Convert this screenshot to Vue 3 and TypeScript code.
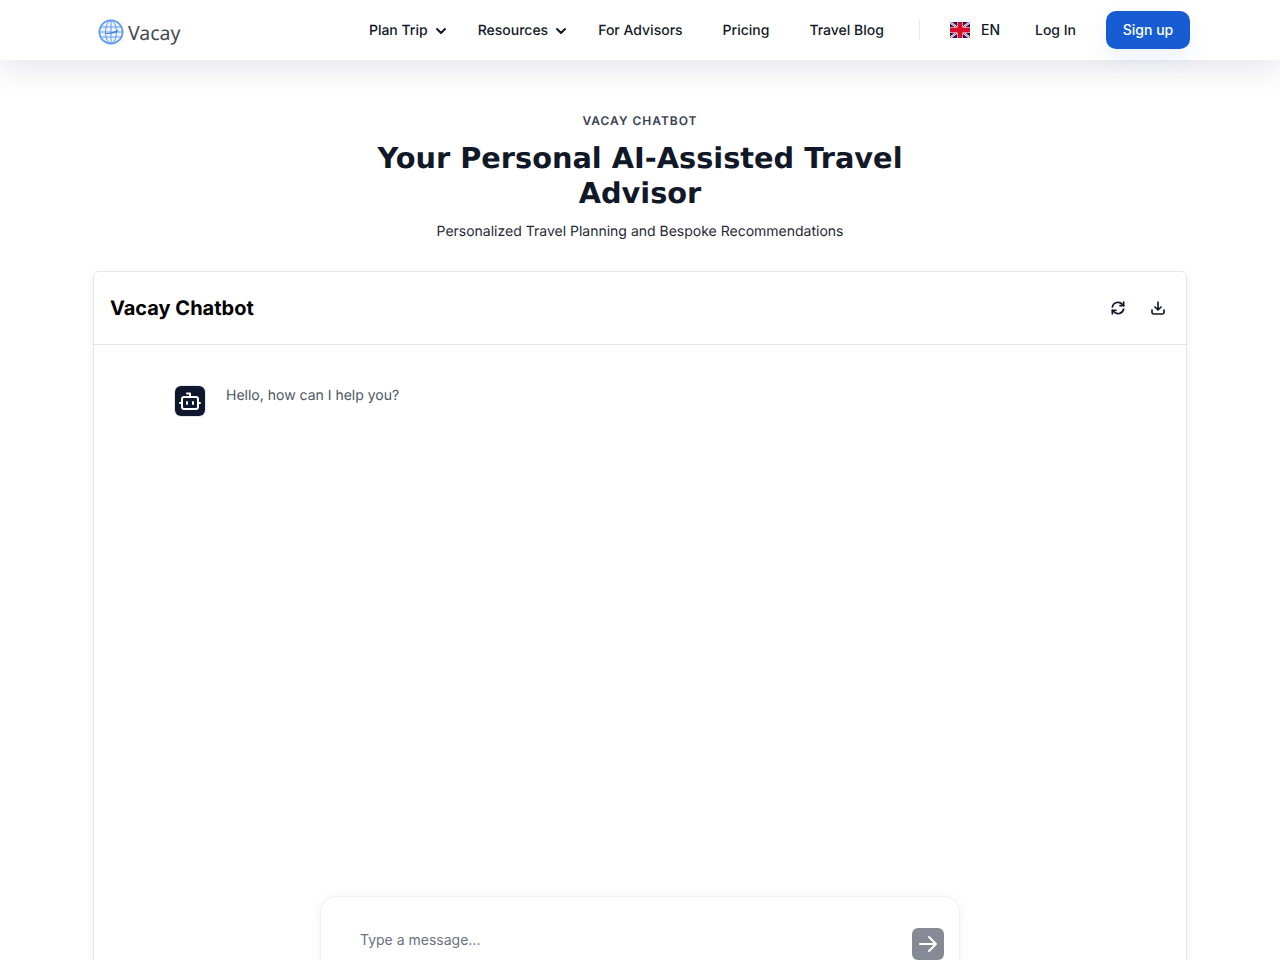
<template>
  <div class="page">
    <header class="topbar">
      <div class="topbar-inner">
        <a class="logo">
          <svg class="globe" viewBox="0 0 26 26" fill="none" stroke="#5f9bef">
            <circle cx="13" cy="13" r="11.6" stroke-width="1.8" fill="#eef5fe" />
            <ellipse cx="13" cy="13" rx="5.5" ry="11.4" stroke-width="1" />
            <path d="M13 1.5v23M2.6 8h20.8M1.5 13h23M2.6 18h20.8" stroke-width="1" />
            <path d="M5 14.5c4-.4 9-.9 12.5-2.6l3-1.2-.6 1.8c-3 2-9 3-14.900 2z" fill="#3f7fe0" stroke="none" />
          </svg>
          <span class="logo-text">Vacay</span>
        </a>
        <nav class="nav">
          <a v-for="item in navItems" :key="item.label" class="nav-link" :class="{ 'has-menu': item.menu }">
            {{ item.label }}
            <svg v-if="item.menu" class="chev" viewBox="0 0 12 8" fill="none" stroke="#111827" stroke-width="2" stroke-linecap="round" stroke-linejoin="round">
              <path d="M2 2l4 4 4-4" />
            </svg>
          </a>
        </nav>
        <span class="divider"></span>
        <button class="lang">
          <svg class="flag" viewBox="0 0 20 16">
            <rect width="20" height="16" fill="#14175f" />
            <path d="M0 0l20 16M20 0L0 16" stroke="#fff" stroke-width="2.400" />
            <path d="M0 0l20 16M20 0L0 16" stroke="#d8102c" stroke-width=".8" />
            <path d="M10 0v16M0 8h20" stroke="#fff" stroke-width="6" />
            <path d="M10 0v16M0 8h20" stroke="#d8102c" stroke-width="5" />
          </svg>
          EN
        </button>
        <a class="login">Log In</a>
        <button class="signup">Sign up</button>
      </div>
    </header>

    <section class="hero">
      <p class="eyebrow">VACAY CHATBOT</p>
      <h1>Your Personal AI-Assisted Travel Advisor</h1>
      <p class="sub">Personalized Travel Planning and Bespoke Recommendations</p>
    </section>

    <section class="card">
      <div class="card-head">
        <h2>Vacay Chatbot</h2>
        <div class="actions">
          <svg viewBox="0 0 24 24" fill="none" stroke="#111827" stroke-width="2.500" stroke-linecap="round" stroke-linejoin="round">
            <path d="M3.500 10.500a8.700 8.700 0 0 1 15.200-3.800L20.500 8.500" />
            <path d="M20.500 3v5.500H15" />
            <path d="M20.500 13.500a8.700 8.700 0 0 1-15.200 3.800L3.500 15.500" />
            <path d="M3.500 21v-5.500H9" />
          </svg>
          <svg viewBox="0 0 24 24" fill="none" stroke="#111827" stroke-width="2.500" stroke-linecap="round" stroke-linejoin="round">
            <path d="M12 3v12M7.500 10.500 12 15l4.500-4.500" />
            <path d="M3 15v3.500A2.500 2.500 0 0 0 5.500 21h13a2.500 2.500 0 0 0 2.500-2.500V15" />
          </svg>
        </div>
      </div>
      <div class="chat">
        <div class="message">
          <span class="avatar">
            <svg viewBox="0 0 24 24" fill="none" stroke="#fff" stroke-width="2" stroke-linecap="round" stroke-linejoin="round">
              <path d="M12 8V4.500H9" />
              <rect x="4" y="8" width="16" height="12" rx="2" />
              <path d="M2 14h2M20 14h2M9 13v2M15 13v2" />
            </svg>
          </span>
          <p>Hello, how can I help you?</p>
        </div>
        <form class="composer" @submit.prevent>
          <input v-model="draft" type="text" placeholder="Type a message..." />
          <button class="send" type="submit">
            <svg viewBox="0 0 24 24" fill="none" stroke="#fff" stroke-width="2" stroke-linecap="round" stroke-linejoin="round">
              <path d="M4 12h16M13 5l7 7-7 7" />
            </svg>
          </button>
        </form>
      </div>
    </section>
  </div>
</template>

<script setup lang="ts">
import { ref } from 'vue';

interface NavItem {
  label: string;
  menu?: boolean;
}

const navItems: NavItem[] = [
  { label: 'Plan Trip', menu: true },
  { label: 'Resources', menu: true },
  { label: 'For Advisors' },
  { label: 'Pricing' },
  { label: 'Travel Blog' },
];

const draft = ref('');
</script>

<style>
html,
body {
  margin: 0;
  height: 100%;
  overflow: hidden;
  background: #fff;
}
</style>

<style scoped>
.page {
  height: 960px;
  overflow: hidden;
  font-family: Inter, 'Liberation Sans', sans-serif;
  color: #111827;
  text-rendering: geometricPrecision;
}

.topbar {
  height: 60px;
  background: #fff;
  box-shadow: 0 10px 30px rgba(17, 24, 60, 0.1);
  position: relative;
}

.topbar-inner {
  height: 100%;
  display: flex;
  align-items: center;
  padding: 0 90px 0 98px;
}

.logo {
  display: flex;
  align-items: center;
  gap: 4px;
  margin-right: auto;
  padding-top: 4px;
}

.globe {
  width: 26px;
  height: 26px;
}

.logo-text {
  font-family: 'Noto Sans', sans-serif;
  font-size: 19.500px;
  color: #454a50;
}

.nav {
  display: flex;
  align-items: center;
}

.nav-link {
  display: flex;
  align-items: center;
  font-size: 14px;
  font-weight: 500;
  line-height: 20px;
  margin-right: 40px;
  padding-top: 1px;
  white-space: nowrap;
}

.nav-link.has-menu {
  margin-right: 31px;
}

.chev {
  width: 12px;
  height: 8px;
  margin-left: 7px;
}

.nav-link:last-child {
  margin-right: 0;
}

.divider {
  width: 1px;
  height: 20px;
  background: #e5e7eb;
  margin: 0 30px 0 35px;
}

.lang {
  display: flex;
  align-items: center;
  gap: 11px;
  border: 0;
  padding: 0;
  background: none;
  font: 500 14px/20px Inter, sans-serif;
  color: #111827;
}

.flag {
  width: 20px;
  height: 16px;
}

.login {
  font-size: 14px;
  font-weight: 500;
  line-height: 20px;
  margin: 0 30px 0 35px;
  padding-top: 1px;
}

.signup {
  width: 84px;
  height: 38px;
  border: 0;
  border-radius: 10px;
  background: #175cd3;
  color: #fff;
  font: 500 14px/20px Inter, sans-serif;
  box-shadow: 0 10px 20px rgba(23, 92, 211, 0.08);
}

.hero {
  padding-top: 53px;
  text-align: center;
}

.eyebrow {
  margin: 0;
  font-size: 12px;
  font-weight: 600;
  line-height: 16px;
  letter-spacing: 1px;
  color: #374151;
}

h1 {
  width: 560px;
  margin: 12px auto 0;
  font-family: 'DejaVu Sans', sans-serif;
  font-size: 28.800px;
  font-weight: 700;
  line-height: 35px;
  color: #111827;
}

.sub {
  margin: 11px 0 0;
  font-size: 14px;
  line-height: 20px;
  color: #1f2937;
}

.card {
  width: 1094px;
  height: 720px;
  box-sizing: border-box;
  margin: 29px auto 0;
  border: 1px solid #e5e7eb;
  border-radius: 6px;
  box-shadow: 0 1px 6px rgba(17, 24, 39, 0.07);
}

.card-head {
  height: 72px;
  display: flex;
  align-items: center;
  justify-content: space-between;
  padding: 0 20px 0 16px;
  border-bottom: 1px solid #e5e7eb;
}

h2 {
  margin: 0;
  font-size: 20px;
  font-weight: 700;
  line-height: 28px;
  color: #000;
}

.actions {
  display: flex;
  gap: 24px;
}

.actions svg {
  width: 16px;
  height: 16px;
}

.chat {
  position: relative;
  height: 647px;
}

.message {
  display: flex;
  gap: 20px;
  padding: 41px 0 0 81px;
}

.avatar {
  width: 30px;
  height: 30px;
  flex: none;
  display: flex;
  align-items: center;
  justify-content: center;
  border-radius: 6px;
  background: #0f172e;
  box-shadow: 0 0 0 1px #e5e7eb;
}

.avatar svg {
  width: 24px;
  height: 24px;
}

.message p {
  margin: 0 0 0 1px;
  font-size: 14px;
  line-height: 20px;
  color: #4b5563;
}

.composer {
  position: absolute;
  left: 226px;
  top: 551px;
  width: 640px;
  height: 96px;
  box-sizing: border-box;
  display: flex;
  align-items: flex-start;
  padding: 30px 15px 0 39px;
  background: #fff;
  border: 1px solid #f0f1f4;
  border-radius: 16px;
  box-shadow: 0 1px 12px rgba(17, 24, 39, 0.05);
}

.composer input {
  flex: 1;
  height: 24px;
  padding: 0;
  border: 0;
  outline: 0;
  font: 14px/20px Inter, sans-serif;
  color: #111827;
}

.composer input::placeholder {
  color: #6b7280;
}

.send {
  width: 32px;
  height: 32px;
  margin-top: 1px;
  padding: 4px;
  border: 0;
  border-radius: 6px;
  background: #868a94;
  display: flex;
  align-items: center;
  justify-content: center;
}

.send svg {
  width: 24px;
  height: 24px;
  flex: none;
}
</style>
